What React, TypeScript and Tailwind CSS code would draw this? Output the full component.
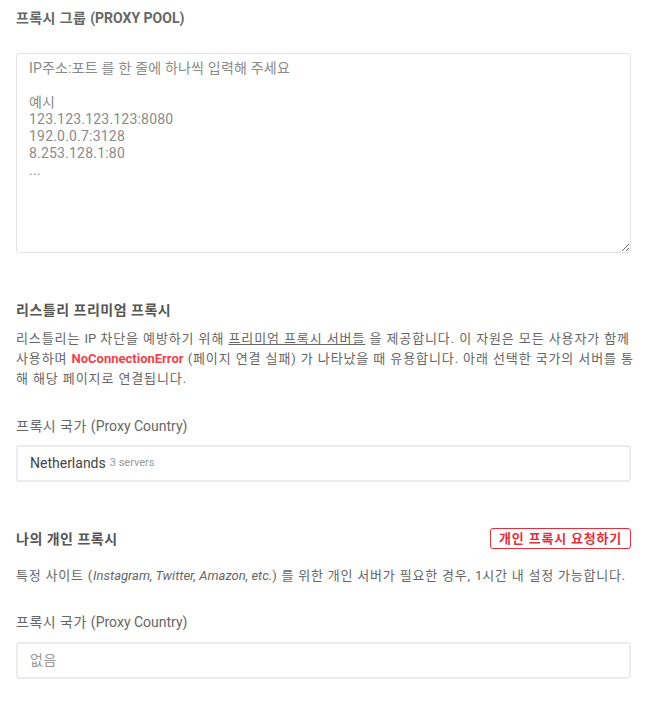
import React from "react";

const font = { fontFamily: 'Roboto, "Noto Sans CJK KR", sans-serif' };

export default function App() {
  return (
    <div className="w-[645px] bg-white pl-4 pr-[14px] pt-[8px] pb-10 text-[#666]" style={font}>
      <div className="text-[14px] font-bold leading-[20px] tracking-[0.4px] text-[#666]">
        프록시 그룹 <span className="tracking-normal">(PROXY POOL)</span>
      </div>
      <textarea
        className="mt-[25px] block h-[200px] w-full resize-y rounded-[3px] border border-[#e3e3e3] px-[12px] py-[6px] text-[14px] leading-[17px] tracking-[0.2px] text-[#555] placeholder:text-[#8a8a8a] outline-none"
        style={font}
        placeholder={"IP주소:포트 를 한 줄에 하나씩 입력해 주세요\n\n예시\n123.123.123.123:8080\n192.0.0.7:3128\n8.253.128.1:80\n..."}
      />

      <div className="mt-[47px] text-[14px] font-bold leading-[20px] tracking-[0.5px] text-[#555]">리스틀리 프리미엄 프록시</div>
      <p className="mt-[9px] text-[13px] leading-[20px] tracking-[0.9px] text-[#666]">
        <span className="block whitespace-nowrap">
          리스틀리는 <span className="tracking-normal">IP</span> 차단을 예방하기 위해{" "}
          <span className="underline">프리미엄 프록시 서버들</span> 을 제공합니다. 이 자원은 모든 사용자가 함께
        </span>
        <span className="block whitespace-nowrap">
          사용하며 <span className="font-bold tracking-normal text-[#f0414b]">NoConnectionError</span> (페이지 연결 실패) 가
          나타났을 때 유용합니다. 아래 선택한 국가의 서버를 통
        </span>
        <span className="block whitespace-nowrap">해 해당 페이지로 연결됩니다.</span>
      </p>

      <div className="mt-[27px] text-[14px] leading-[20px] tracking-[0.5px] text-[#666]">
        프록시 국가 <span className="tracking-normal">(Proxy Country)</span>
      </div>
      <div className="mt-[9px] flex h-[37px] items-center rounded-[3px] border-2 border-[#ececec] px-[12px]">
        <span className="text-[14px] text-[#444]">Netherlands</span>
        <span className="ml-[4px] text-[11px] text-[#999]">3 servers</span>
      </div>

      <div className="mt-[46px] flex items-center justify-between">
        <div className="text-[14px] font-bold leading-[20px] tracking-[0.5px] text-[#555]">나의 개인 프록시</div>
        <button className="h-[21px] rounded-[3px] border border-[#e2303f] px-[8px] text-[13px] font-bold leading-[18px] tracking-[0.8px] text-[#e2303f]">
          개인 프록시 요청하기
        </button>
      </div>
      <p className="mt-[17px] whitespace-nowrap text-[13px] leading-[20px] tracking-[0.8px] text-[#666]">
        특정 사이트 (<i className="tracking-normal">Instagram, Twitter, Amazon, etc.</i>) 를 위한 개인 서버가 필요한 경우,{" "}
        <span className="tracking-normal">1</span>시간 내 설정 가능합니다.
      </p>

      <div className="mt-[26px] text-[14px] leading-[20px] tracking-[0.5px] text-[#666]">
        프록시 국가 <span className="tracking-normal">(Proxy Country)</span>
      </div>
      <div className="mt-[10px] flex h-[37px] items-center rounded-[3px] border-2 border-[#ececec] px-[12px]">
        <span className="text-[14px] tracking-[0.5px] text-[#999]">없음</span>
      </div>
    </div>
  );
}
